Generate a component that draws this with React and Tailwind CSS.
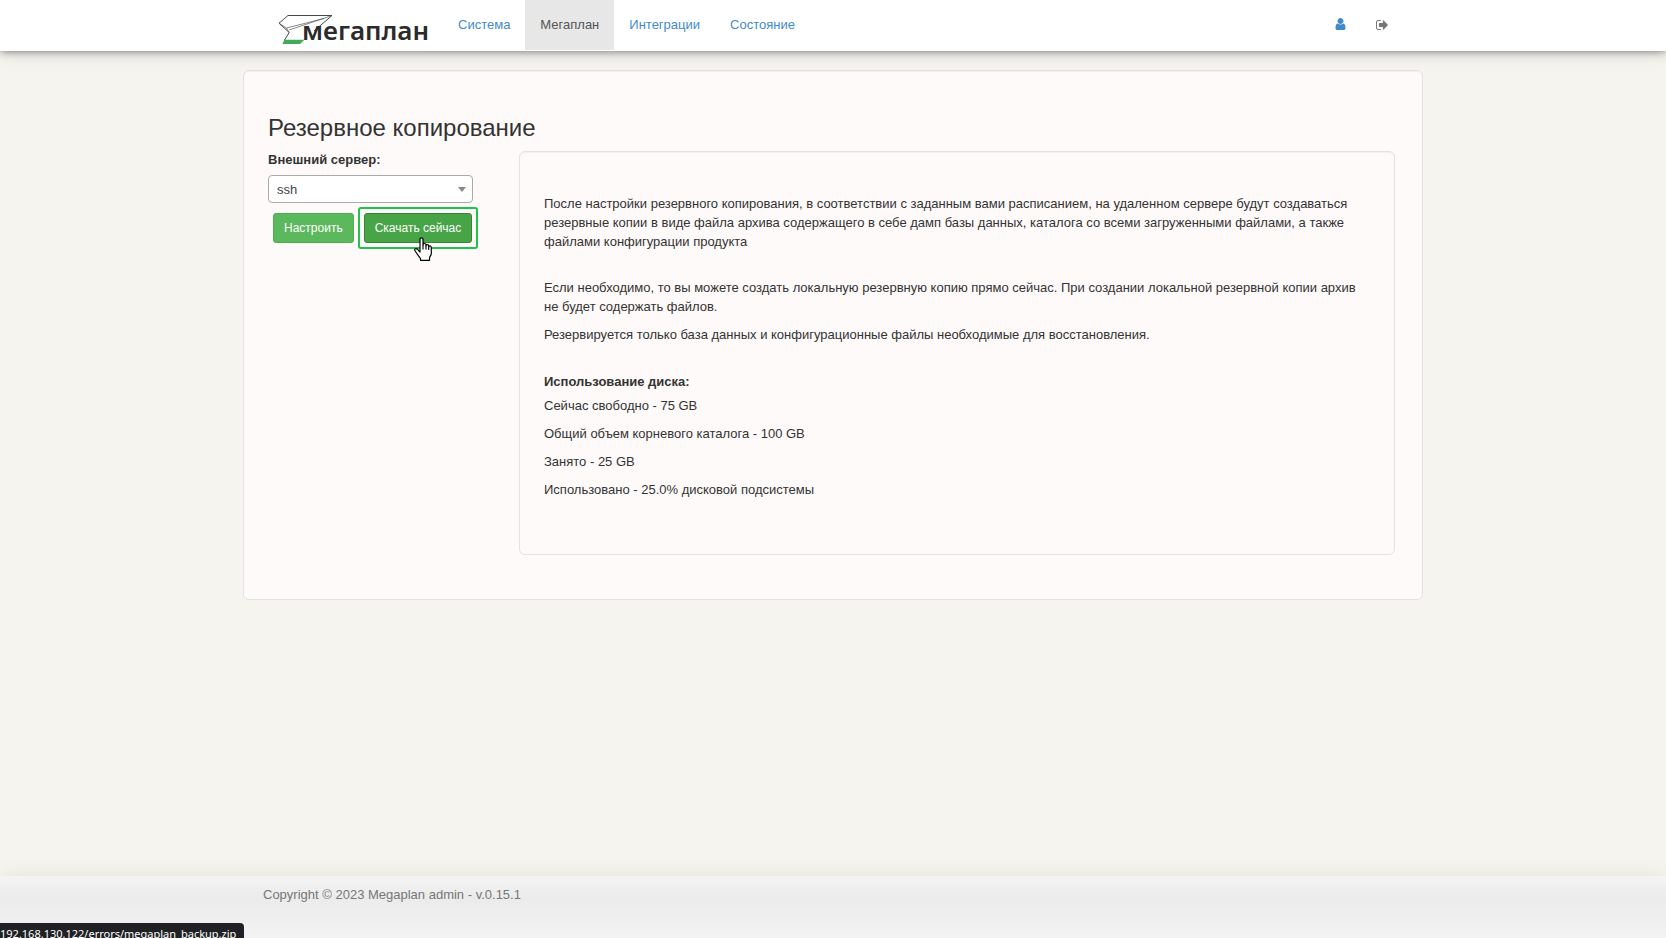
import React, { useState } from "react";

const navItems = [
  { id: "system", label: "Система" },
  { id: "megaplan", label: "Мегаплан" },
  { id: "integrations", label: "Интеграции" },
  { id: "state", label: "Состояние" },
];

const diskUsage = [
  "Сейчас свободно - 75 GB",
  "Общий объем корневого каталога - 100 GB",
  "Занято - 25 GB",
  "Использовано - 25.0% дисковой подсистемы",
];

const Logo = () => (
  <svg
    width="150"
    height="36"
    viewBox="0 0 150 36"
    role="img"
    aria-label="Мегаплан"
    className="overflow-visible"
  >
    <path d="M6.2 27.7H26.5L22 32H4.5Z" fill="#40ac58" />
    <path
      d="M10 3.500H54L36 19M10 3.500L1 11.2L11.2 20.500L6.500 28"
      fill="none"
      stroke="#333"
      strokeWidth="0.9"
      strokeLinejoin="round"
    />
    <path
      d="M1 11.2L8.5 16L46 6.500M11.2 20.500L8.5 16M11.2 18L54 3.500"
      fill="none"
      stroke="#555"
      strokeWidth="0.7"
    />
    <text
      x="24"
      y="28"
      fill="#2b2b2b"
      className="font-['Noto_Sans',sans-serif] text-[26px] font-semibold"
    >
      мегаплан
    </text>
  </svg>
);

const UserIcon = () => (
  <svg width="11" height="12" viewBox="0 128 1280 1536" fill="currentColor" aria-hidden="true">
    <path d="M1280 1399q0 109-62.5 187t-150.5 78h-854q-88 0-150.5-78t-62.5-187q0-85 8.5-160.5t31.5-152 58.5-131 94-89 134.5-34.5q131 128 313 128t313-128q76 0 134.5 34.5t94 89 58.5 131 31.5 152 8.5 160.5zm-256-887q0 159-112.5 271.5t-271.5 112.5-271.5-112.5-112.5-271.5 112.5-271.5 271.5-112.5 271.5 112.5 112.5 271.5z" />
  </svg>
);

const SignOutIcon = () => (
  <svg width="12" height="10" viewBox="0 256 1568 1280" fill="currentColor" aria-hidden="true">
    <path d="M640 1440q0 4 1 20t.5 26.5-3 23.5-10 19.5-20.5 6.5h-320q-119 0-203.5-84.5t-84.5-203.5v-704q0-119 84.5-203.5t203.5-84.5h320q13 0 22.5 9.5t9.5 22.5q0 4 1 20t.5 26.5-3 23.5-10 19.5-20.5 6.5h-320q-66 0-113 47t-47 113v704q0 66 47 113t113 47h312l11.5 1 11.5 3 8 5.5 7 9 2 13.5zm928-544q0 26-19 45l-544 544q-19 19-45 19t-45-19-19-45v-288h-448q-26 0-45-19t-19-45v-384q0-26 19-45t45-19h448v-288q0-26 19-45t45-19 45 19l544 544q19 19 19 45z" />
  </svg>
);

const HandCursor = () => (
  <svg
    width="18"
    height="24"
    viewBox="0 0 18 24"
    aria-hidden="true"
    className="pointer-events-none absolute top-7 left-[54px]"
  >
    <path
      d="M6 15V2.2C6 .3 9 .3 9 2.2V8C9 6 12 6 12 8V9C12 7.200 14.700 7.200 14.700 9V10C14.700 8.500 17.300 8.500 17.300 10.500V16.500C17.300 18.500 15.500 19.500 15.500 21V23.300H6.500V21.500C5 19.500 3 17 1 13.800C0 12 2 10.800 3.500 12.300Z"
      fill="#fff"
      stroke="#000"
      strokeWidth="1.2"
      strokeLinejoin="round"
    />
    <path d="M9 8V12.500M12 9V12.500M14.700 10V13" stroke="#000" strokeWidth="1.1" />
  </svg>
);

const Header = ({ active, onSelect }) => (
  <header className="relative bg-white shadow-[0_0_8px_rgba(0,0,0,0.5),0_0_20px_rgba(0,0,0,0.15)]">
    <div className="mx-auto flex h-[51px] max-w-[1180px] items-start">
      <a href="#home" className="ml-[35px] pt-3">
        <Logo />
      </a>
      <nav className="ml-[15px] flex">
        {navItems.map((item) => (
          <a
            key={item.id}
            href={`#${item.id}`}
            onClick={() => onSelect(item.id)}
            className={
              active === item.id
                ? "h-[50px] bg-[#e7e7e7] px-[15px] pt-[15px] text-[#555]"
                : "h-[50px] px-[15px] pt-[15px] text-[#428bca]"
            }
          >
            {item.label}
          </a>
        ))}
      </nav>
      <div className="mr-5 ml-auto flex h-[50px] items-center">
        <a href="#profile" aria-label="Профиль" className="px-[15px] pb-0.5 text-[#428bca]">
          <UserIcon />
        </a>
        <a href="#logout" aria-label="Выйти" className="px-[15px] text-[#777]">
          <SignOutIcon />
        </a>
      </div>
    </div>
  </header>
);

const BackupForm = () => {
  const [server, setServer] = useState("ssh");

  return (
    <form className="w-[251px] shrink-0" onSubmit={(e) => e.preventDefault()}>
      <label htmlFor="server" className="mb-1.5 block leading-[18px] font-bold">
        Внешний сервер:
      </label>
      <div className="relative w-[205px]">
        <select
          id="server"
          value={server}
          onChange={(e) => setServer(e.target.value)}
          className="block h-7 w-full appearance-none rounded border border-[#aaa] bg-white px-2 text-[#444]"
        >
          <option value="ssh">ssh</option>
          <option value="ftp">ftp</option>
        </select>
        <svg
          width="8"
          height="5"
          viewBox="0 0 8 5"
          aria-hidden="true"
          className="pointer-events-none absolute top-3 right-[7px]"
        >
          <path d="M0 0H8L4 5Z" fill="#888" />
        </svg>
      </div>
      <div className="mt-1 ml-[5px] flex items-center gap-1 text-xs">
        <button
          type="button"
          className="h-[30px] rounded-[3px] border border-[#4cae4c] bg-[#5cb85c] px-2.5 text-white"
        >
          Настроить
        </button>
        <div className="relative rounded-[3px] border-2 border-[#1fc24a] p-1">
          <button
            type="button"
            className="block h-[30px] rounded-[3px] border border-[#398439] bg-[#47a447] px-2.5 whitespace-nowrap text-white"
          >
            Скачать сейчас
          </button>
          <HandCursor />
        </div>
      </div>
    </form>
  );
};

const BackupInfo = () => (
  <section className="min-w-0 flex-1 rounded-md border border-[#e3e3e3] px-6 pt-[42px] pb-[55px] shadow-[inset_0_1px_1px_rgba(0,0,0,0.05)]">
    <p>
      После настройки резервного копирования, в соответствии с заданным вами расписанием, на
      удаленном сервере будут создаваться резервные копии в виде файла архива содержащего в себе
      дамп базы данных, каталога со всеми загруженными файлами, а также файлами конфигурации
      продукта
    </p>
    <p className="mt-[27px]">
      Если необходимо, то вы можете создать локальную резервную копию прямо сейчас. При создании
      локальной резервной копии архив не будет содержать файлов.
    </p>
    <p className="mt-[9px]">
      Резервируется только база данных и конфигурационные файлы необходимые для восстановления.
    </p>
    <h2 className="mt-7 mb-[5px] font-bold">Использование диска:</h2>
    <div className="flex flex-col gap-[9px]">
      {diskUsage.map((line) => (
        <p key={line}>{line}</p>
      ))}
    </div>
  </section>
);

const App = () => {
  const [active, setActive] = useState("megaplan");

  return (
    <div className="relative flex min-h-screen flex-col overflow-hidden bg-[#f5f4ef] font-['Liberation_Sans',Arial,sans-serif] text-[13px] leading-[19px] text-[#333]">
      <Header active={active} onSelect={setActive} />

      <main className="mx-auto mt-[19px] w-full max-w-[1180px] rounded-md border border-[#e3e3e3] bg-[#fefaf9] py-11 pr-[27px] pl-6 shadow-[inset_0_1px_1px_rgba(0,0,0,0.05)]">
        <h1 className="text-2xl leading-[26px]">Резервное копирование</h1>
        <div className="mt-2.5 flex items-start">
          <BackupForm />
          <BackupInfo />
        </div>
      </main>

      <footer className="mt-auto h-[62px] bg-linear-to-b from-[#f4f4f4] via-[#ebebeb] via-35% to-[#f3f3f3] shadow-[0_0_20px_rgba(0,0,0,0.08)]">
        <p className="mx-auto max-w-[1180px] px-5 pt-[9px] text-[#777]">
          Copyright © 2023 Megaplan admin - v.0.15.1
        </p>
      </footer>

      {/* browser link hint, partly below the window edge */}
      <div className="absolute bottom-0 left-0 h-[15px] w-[244px] rounded-tr bg-[#202124] font-['Noto_Sans',sans-serif] text-[11px] leading-[22px] whitespace-nowrap text-white">
        192.168.130.122/errors/megaplan_backup.zip
      </div>
    </div>
  );
};

export default App;
